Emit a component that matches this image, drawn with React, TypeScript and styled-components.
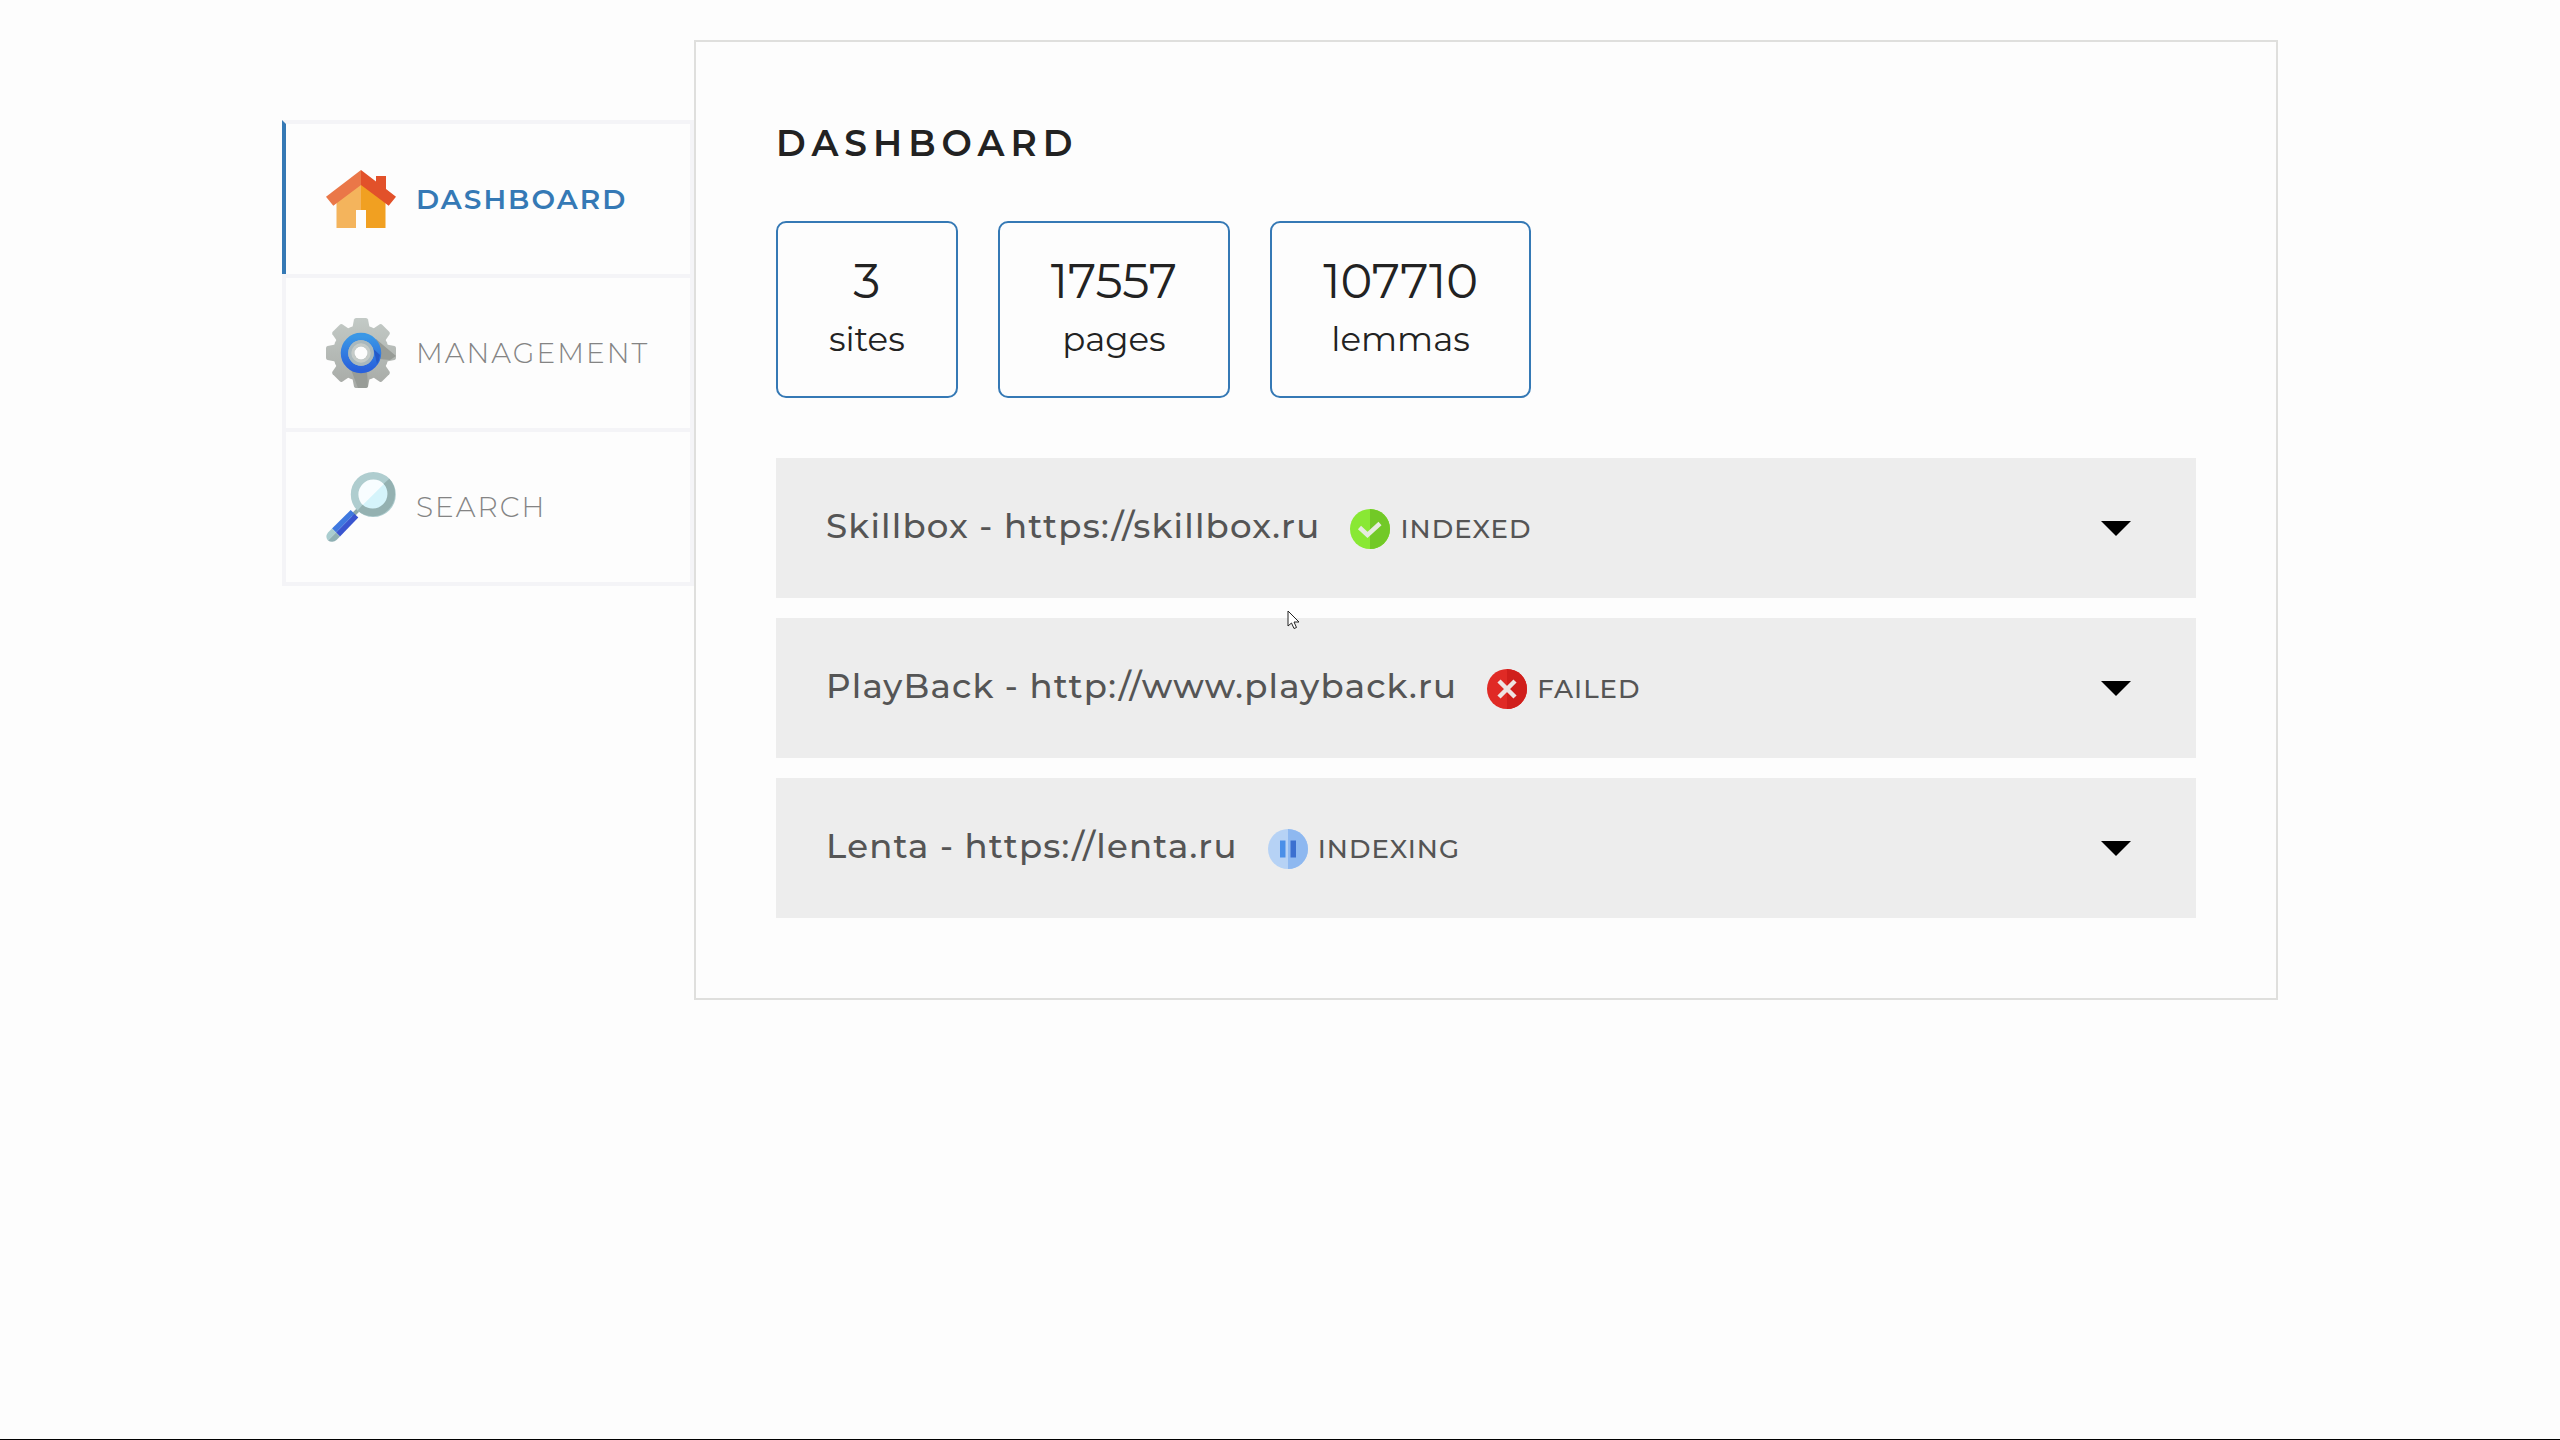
import React from "react";
import styled, { createGlobalStyle, css } from "styled-components";

const GlobalStyle = createGlobalStyle`
  *, *::before, *::after { box-sizing: border-box; }
  body {
    margin: 0;
    background: #fdfdfd;
    color: #222;
    font-family: Montserrat, Inter, "Open Sans", sans-serif;
  }
`;

const Page = styled.div`
  min-height: 100vh;
  padding: 40px 24px;
  border-bottom: 1px solid #000;
`;

const Container = styled.div`
  display: flex;
  align-items: flex-start;
  max-width: 1996px;
  margin: 0 auto;
`;

const Nav = styled.nav`
  flex: 0 0 412px;
  padding-top: 80px;
`;

const NavLink = styled.a<{ $active?: boolean }>`
  display: flex;
  align-items: center;
  gap: 20px;
  padding: 40px 36px 40px 40px;
  border: 4px solid #f4f4f7;
  background: #fdfdfd;
  color: #848484;
  font-size: 28px;
  font-weight: 300;
  line-height: 36px;
  letter-spacing: 2px;
  text-transform: uppercase;
  text-decoration: none;

  & + & {
    margin-top: -4px;
  }

  ${(p) =>
    p.$active &&
    css`
      border-left-color: #3579b5;
      color: #3579b5;
      font-weight: 600;
    `}
`;

const NavIcon = styled.svg`
  flex: none;
  width: 70px;
  height: 70px;
  overflow: visible;
`;

const Panel = styled.main`
  flex: 1;
  min-width: 0;
  padding: 80px;
  border: 2px solid #dfdfdd;
`;

const Title = styled.h1`
  margin: 0 0 56px;
  font-size: 36px;
  font-weight: 600;
  line-height: 43px;
  letter-spacing: 6px;
  text-transform: uppercase;
`;

const Stats = styled.div`
  display: flex;
  flex-wrap: wrap;
  gap: 40px;
  margin-bottom: 60px;
`;

const Stat = styled.div`
  display: flex;
  flex-direction: column;
  align-items: center;
  gap: 6px;
  padding: 29px 51px 34px;
  border: 2px solid #3579b5;
  border-radius: 10px;
`;

const StatValue = styled.strong`
  font-size: 48px;
  font-weight: 400;
  line-height: 58px;
`;

const StatLabel = styled.span`
  font-size: 34px;
  font-weight: 400;
  line-height: 46px;
`;

const SiteList = styled.div`
  display: flex;
  flex-direction: column;
  gap: 20px;
`;

const SiteRow = styled.button`
  display: flex;
  align-items: center;
  width: 100%;
  height: 140px;
  padding: 0 65px 0 50px;
  border: 0;
  background: #ededed;
  color: #555;
  font-family: inherit;
  text-align: left;
`;

const SiteName = styled.span`
  margin-right: 30px;
  padding-bottom: 4px;
  font-size: 34px;
  font-weight: 500;
  line-height: 42px;
  letter-spacing: 0.035em;
`;

const Status = styled.span`
  display: flex;
  align-items: center;
  gap: 10px;
  padding-top: 2px;
  font-size: 26px;
  font-weight: 500;
  line-height: 40px;
  letter-spacing: 0.04em;
  text-transform: uppercase;
`;

const StatusSvg = styled.svg`
  width: 40px;
  height: 40px;
`;

const Arrow = styled.span`
  margin-left: auto;
  border: 15px solid transparent;
  border-top-color: #000;
  border-bottom-width: 0;
`;

const Cursor = styled.svg`
  position: absolute;
  left: 1287px;
  top: 610px;
  width: 13px;
  height: 20px;
  pointer-events: none;
`;

function HomeIcon() {
  return (
    <NavIcon viewBox="0 0 70 70" aria-hidden="true">
      <path d="M10.500 36 35 17V46H30V64H10.500Z" fill="#f4b45c" />
      <path d="M59.500 36 35 17V46H40V64H59.500Z" fill="#f1a021" />
      <path d="M35 6 0 32.700 7.300 41.700 35 21Z" fill="#ea7748" />
      <path d="M35 6 50 17.500V12H60V25L70 32.700 62.700 41.700 35 21Z" fill="#e2512a" />
    </NavIcon>
  );
}

const teeth = [0, 45, 90, 135, 180, 225, 270, 315];

function GearIcon() {
  return (
    <NavIcon viewBox="0 0 70 70" aria-hidden="true">
      <defs>
        <linearGradient id="metal" x1="0" y1="0" x2="0" y2="70" gradientUnits="userSpaceOnUse">
          <stop offset="0" stopColor="#c3cac6" />
          <stop offset="1" stopColor="#a7aaa6" />
        </linearGradient>
        <linearGradient id="ring" x1="0" y1="0" x2="0" y2="1">
          <stop offset="0" stopColor="#3a97e6" />
          <stop offset="1" stopColor="#2961dc" />
        </linearGradient>
        <mask id="gearShape">
          <circle cx="35" cy="35" r="28" fill="#fff" />
          {teeth.map((angle) => (
            <path
              key={angle}
              d="M26 12 28 1.500Q28.500 0 30 0H40Q41.500 0 42 1.500L44 12Z"
              transform={`rotate(${angle} 35 35)`}
              fill="#fff"
            />
          ))}
          <circle cx="35" cy="35" r="6.500" fill="#000" />
        </mask>
      </defs>
      <g mask="url(#gearShape)">
        <rect width="70" height="70" fill="url(#metal)" />
        <path d="M50 21 70 38 64 42 53 41 48 49ZM24 49 32 70H42L41 53Z" fill="#989c97" />
        <circle cx="35" cy="35" r="16.500" fill="none" stroke="url(#ring)" strokeWidth="7.500" />
        <path d="M47.500 31 54 37A20 20 0 0 1 51 46Z" fill="#2559c8" />
        <circle cx="35" cy="35" r="9.800" fill="none" stroke="#a9b8bd" strokeWidth="6" />
        <circle cx="35" cy="35" r="8.200" fill="none" stroke="#c5cbc8" strokeWidth="3" />
      </g>
    </NavIcon>
  );
}

function SearchIcon() {
  return (
    <NavIcon viewBox="0 0 70 70" aria-hidden="true">
      <path d="M26 44 34 36" stroke="#8fa9a8" strokeWidth="4" />
      <circle cx="47.300" cy="22.500" r="15" fill="#f8fdff" />
      <path d="M57.900 11.900A15 15 0 0 1 36.700 33.100Z" fill="#d5f4fb" />
      <circle cx="47.300" cy="22.500" r="18.700" fill="none" stroke="#afcdcf" strokeWidth="7.600" />
      <path d="M60.500 9.300A18.700 18.700 0 0 1 34.100 35.700" fill="none" stroke="#94b1b1" strokeWidth="7.600" />
      <path d="M24.700 38 28.500 41.800 10 60.500 6 56.500Z" fill="#3f78df" />
      <path d="M28.500 41.800 32.300 45.600 14 64.500 10 60.500Z" fill="#3a55cf" />
      <path d="M6 56.500 10 60.500 2 68.500A6.500 6.500 0 0 1 2 60.500Z" fill="#a9cdcf" />
      <path d="M10 60.500 14 64.500 10.500 68A6.500 6.500 0 0 1 2 68.500Z" fill="#8fb0b3" />
    </NavIcon>
  );
}

type StatusKind = "Indexed" | "Failed" | "Indexing";

const statusColors: Record<StatusKind, [string, string]> = {
  Indexed: ["#89e834", "#72c927"],
  Failed: ["#e02a25", "#d01f1c"],
  Indexing: ["#b6d2f5", "#8eb8f0"],
};

function StatusIcon({ kind }: { kind: StatusKind }) {
  const [left, right] = statusColors[kind];
  return (
    <StatusSvg viewBox="0 0 40 40" aria-hidden="true">
      <circle cx="20" cy="20" r="20" fill={left} />
      <path d="M20 0A20 20 0 0 1 20 40Z" fill={right} />
      {kind === "Indexed" && (
        <path d="M9.500 18.500 17.500 26 30 14.500" fill="none" stroke="#e6ebe0" strokeWidth="4.500" />
      )}
      {kind === "Failed" && (
        <path d="M12 12 28 28M28 12 12 28" fill="none" stroke="#eee4e2" strokeWidth="4.500" />
      )}
      {kind === "Indexing" && (
        <>
          <path d="M12 11.500H17.500V28.500H12Z" fill="#4a8fe8" />
          <path d="M22.500 11.500H28V28.500H22.500Z" fill="#3b6fd0" />
        </>
      )}
    </StatusSvg>
  );
}

const stats = [
  { value: "3", label: "sites" },
  { value: "17557", label: "pages" },
  { value: "107710", label: "lemmas" },
];

const sites: { name: string; status: StatusKind }[] = [
  { name: "Skillbox - https://skillbox.ru", status: "Indexed" },
  { name: "PlayBack - http://www.playback.ru", status: "Failed" },
  { name: "Lenta - https://lenta.ru", status: "Indexing" },
];

export default function App() {
  return (
    <Page>
      <GlobalStyle />
      <Container>
        <Nav aria-label="Sections">
          <NavLink href="#dashboard" $active aria-current="page">
            <HomeIcon />
            Dashboard
          </NavLink>
          <NavLink href="#management">
            <GearIcon />
            Management
          </NavLink>
          <NavLink href="#search">
            <SearchIcon />
            Search
          </NavLink>
        </Nav>
        <Panel>
          <Title>Dashboard</Title>
          <Stats>
            {stats.map((s) => (
              <Stat key={s.label}>
                <StatValue>{s.value}</StatValue>
                <StatLabel>{s.label}</StatLabel>
              </Stat>
            ))}
          </Stats>
          <SiteList>
            {sites.map((s) => (
              <SiteRow key={s.name} type="button" aria-expanded="false">
                <SiteName>{s.name}</SiteName>
                <Status>
                  <StatusIcon kind={s.status} />
                  {s.status}
                </Status>
                <Arrow />
              </SiteRow>
            ))}
          </SiteList>
        </Panel>
      </Container>
      <Cursor viewBox="0 0 13 20" aria-hidden="true">
        <path d="M1 1V16L4.500 13 7 18.500 9.500 17.500 7 12H12Z" fill="#fff" stroke="#222" />
      </Cursor>
    </Page>
  );
}
